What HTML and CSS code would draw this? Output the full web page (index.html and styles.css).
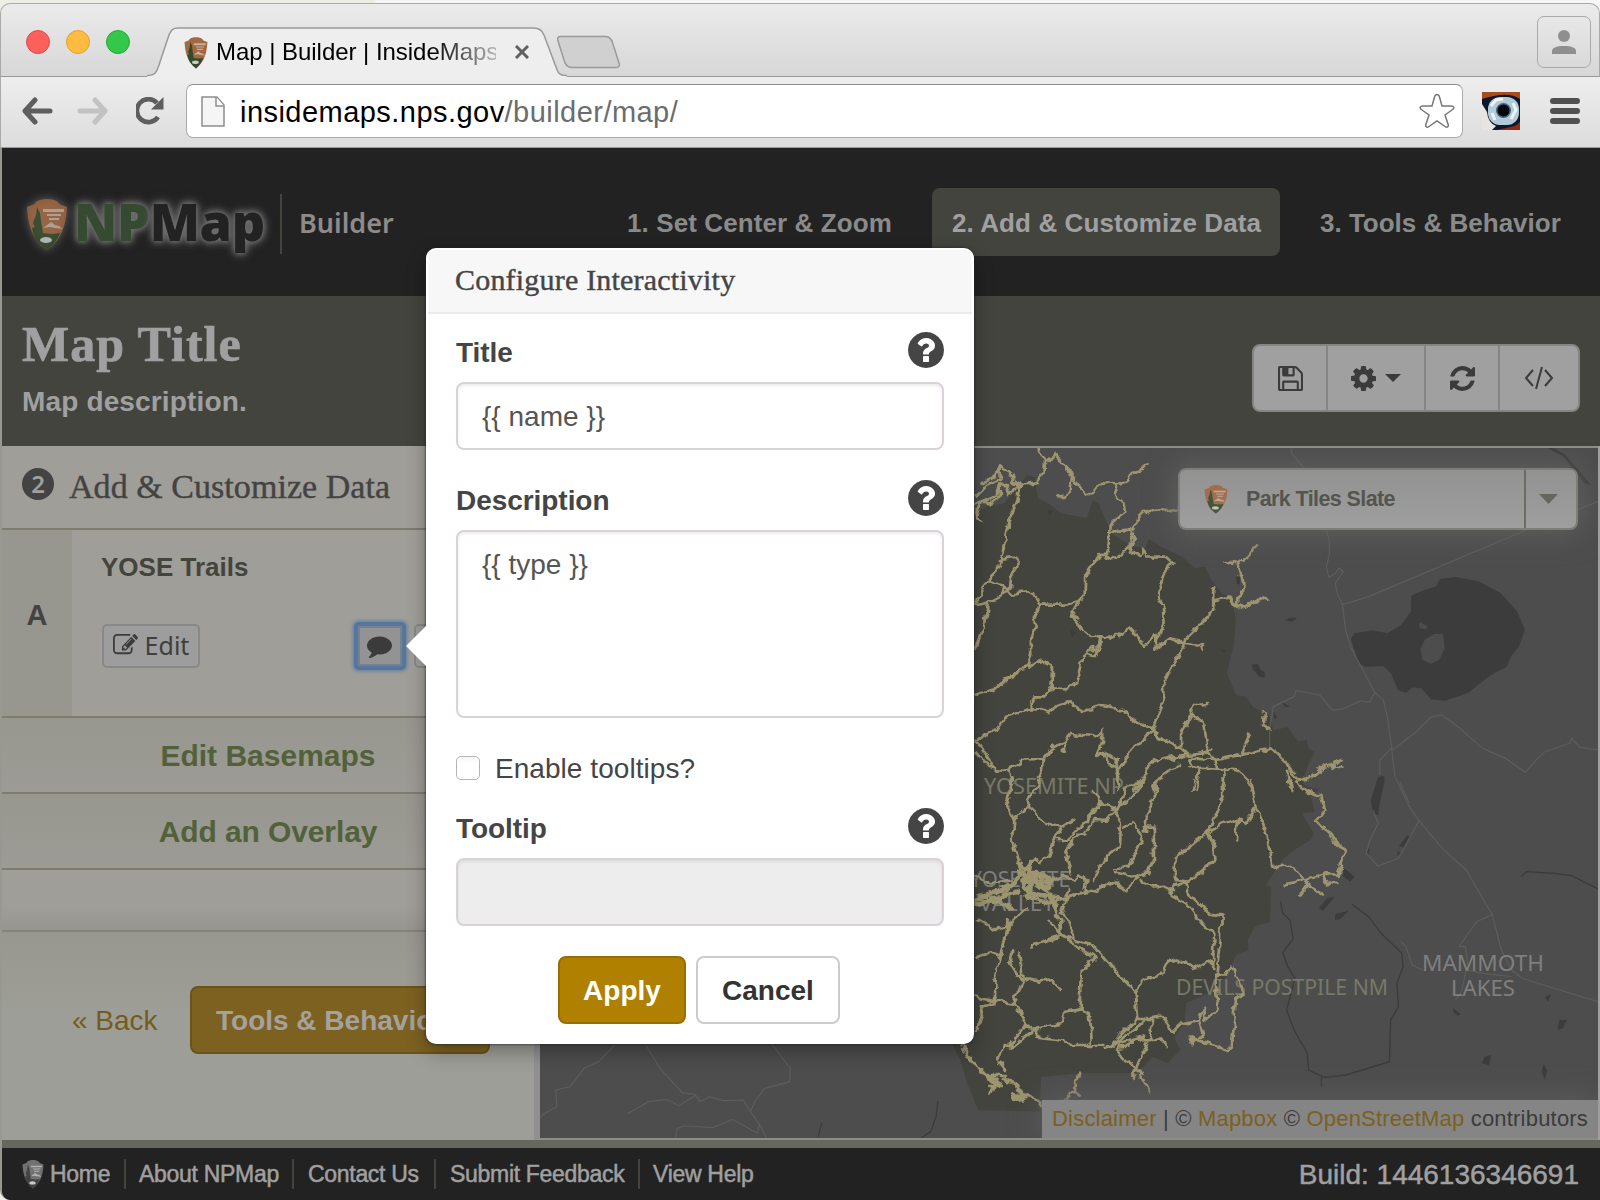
FILE: index.html
```html
<!DOCTYPE html>
<html lang="en">
<head>
<meta charset="utf-8">
<title>Map | Builder | InsideMaps</title>
<link rel="stylesheet" href="styles.css">
</head>
<body>
<svg class="defs" width="0" height="0">
  <defs>
    <symbol id="shield" viewBox="0 0 42 54" preserveAspectRatio="none">
      <path fill="#a5673f" d="M10 5C14 1 28 1 32 5C34 9 38 8 41 10C40 28 36 42 21 53C6 42 2 28 1 10C4 8 8 9 10 5Z"/>
      <path fill="#324b2a" d="M11 10l3 6 1 8 2 12 9 1 8-1c-3 8-8 13-13 17C13 47 8 42 6 31l3-1-2-4 3-8z"/>
      <path fill="#c4b0a4" d="M17 12h21v3H17zM21 17h14v2H21zM23 21h10v2H23zM17 31l8-6 4 3 4 1 4 3-8-1-5-1z"/>
      <ellipse cx="20" cy="43" rx="6" ry="3" fill="#c9ccc6"/>
    </symbol>
    <symbol id="help" viewBox="128 128 1536 1536"><path d="M1024 1376v-192q0-14-9-23t-23-9h-192q-14 0-23 9t-9 23v192q0 14 9 23t23 9h192q14 0 23-9t9-23zm256-672q0-88-55.500-163t-138.500-116-170-41q-243 0-371 213-15 24 8 42l132 100q7 6 19 6 16 0 25-12 53-68 86-92 34-24 86-24 48 0 85.500 26t37.500 59q0 38-20 61t-68 45q-63 28-115.500 86.500t-52.500 125.500v36q0 14 9 23t23 9h192q14 0 23-9t9-23q0-19 21.500-49.500t54.500-49.500q32-18 49-28.500t46-35 44.500-48 28-60.500 12.500-81zm384 192q0 209-103 385.500t-279.500 279.500-385.500 103-385.500-103-279.500-279.500-103-385.500 103-385.500 279.500-279.500 385.500-103 385.500 103 279.500 279.500 103 385.500z"/></symbol>
    <filter id="wander" filterUnits="userSpaceOnUse" x="-10" y="-1400" width="2600" height="4600"><feTurbulence type="fractalNoise" baseFrequency=".09" numOctaves="3" seed="7"/><feDisplacementMap in="SourceGraphic" scale="9" xChannelSelector="R" yChannelSelector="G"/></filter>
  </defs>
</svg>

<div class="window">
  <div class="titlebar">
    <div class="lights"><i class="red"></i><i class="yellow"></i><i class="green"></i></div>
    <div class="tab">
      <svg class="tab-shape" width="420" height="50" viewBox="0 0 420 50">
        <path d="M0 49C10 49 10 43 12 38L22 8C24 3 26 1.500 31 1.500H387C392 1.500 395 3 397 8L409 40C411 46 412 49 420 49V50H0Z" fill="#eee"/>
        <path d="M0 48.500C10 48.500 10 43 12 38L22 8C24 3 26 1 31 1H387C392 1 395 3 397 8L409 40C411 46 412 48.500 420 48.500" fill="none" stroke="#999" stroke-width="1.500"/>
      </svg>
      <svg class="favicon" width="24" height="33"><use href="#shield" width="24" height="33"/></svg>
      <span class="tab-title">Map | Builder | InsideMaps</span>
      <svg class="tab-close" width="14" height="14" viewBox="0 0 14 14"><path d="M1 1l12 12M13 1L1 13" stroke="#606060" stroke-width="3"/></svg>
    </div>
    <svg class="new-tab" width="66" height="34" viewBox="0 0 66 34"><path d="M5 1.500H49C53 1.500 54 3 56 6L63 28C64 31 63 32.500 60 32.500H17C12 32.500 11 31 9 28L2 6C1 3 2 1.500 5 1.500Z" fill="#d0d0d0" stroke="#999" stroke-width="1.500"/></svg>
    <div class="profile"><svg width="24" height="24" viewBox="0 0 24 24" fill="#8f8f8f"><circle cx="12" cy="6" r="6"/><path d="M0 24v-3c0-3 4-5 12-5s12 2 12 5v3z"/></svg></div>
  </div>
  <div class="toolbar">
    <svg class="nav-icon" width="32" height="28" viewBox="0 0 32 28" fill="none" stroke="#5e5e5e" stroke-width="5" stroke-linecap="round" stroke-linejoin="round"><path d="M14 3L4 14l10 11M5 14h24"/></svg>
    <svg class="nav-icon" width="32" height="28" viewBox="0 0 32 28" fill="none" stroke="#c2c2c2" stroke-width="5" stroke-linecap="round" stroke-linejoin="round"><path d="M18 3l10 11-10 11M27 14H3"/></svg>
    <svg class="reload" width="28" height="28" viewBox="0 0 28 28"><path d="M22 20A11.500 11.500 0 1 1 21 6" fill="none" stroke="#5e5e5e" stroke-width="4.600"/><path d="M27.500 0v12.500H15z" fill="#5e5e5e"/></svg>
    <div class="omnibox">
      <svg width="24" height="31" viewBox="0 0 24 31"><path d="M1 1h15l7 8v21H1z" fill="#f5f5f5" stroke="#8d8d8d" stroke-width="1.500"/><path d="M15 1v9h8" fill="#fff" stroke="#8d8d8d" stroke-width="1.500"/></svg>
      <span class="url"><b>insidemaps.nps.gov</b>/builder/map/</span>
      <svg width="36" height="36" viewBox="0 0 36 36"><path d="M18 1.500C19 1.500 20 2 20.500 4L23 13H32C35 13 36 15 33 17L26 22L29 31C30 34 28 35 26 33.500L18 28L10 33.500C8 35 6 34 7 31L10 22L3 17C0 15 1 13 4 13H13L15.500 4C16 2 17 1.500 18 1.500Z" fill="none" stroke="#777" stroke-width="1.500"/></svg>
    </div>
    <svg class="extension" width="38" height="38" viewBox="0 0 38 38"><rect width="38" height="38" fill="#0e1729"/><path d="M0 0H38V7C28 0 14 3 0 7z" fill="#a54d21"/><path d="M0 12L5 20Q6 31 14 34L10 38H0z" fill="#e6e5e3"/><path d="M38 30V38H15L33 34z" fill="#8c2c16"/><rect x="6" y="5" width="31" height="28" rx="12" fill="#b1cad9"/><path d="M9 14l5-6 7-1M31 11l3 7-5 9M13 28l-3-7" stroke="#edf4f6" stroke-width="3" fill="none"/><circle cx="21.500" cy="18.500" r="7.500" fill="#47637a"/><circle cx="21.500" cy="18.500" r="6" fill="#02050a"/></svg>
    <div class="menu-icon"><i></i><i></i><i></i></div>
  </div>

  <div class="app">
    <header class="site-header">
      <div class="brand">
        <svg class="brand-shield" width="42" height="54"><use href="#shield" width="42" height="54" opacity=".78"/></svg>
        <span class="brand-name"><em>NP</em>Map</span>
        <span class="brand-sub">Builder</span>
      </div>
      <nav class="steps">
        <a class="step s1">1. Set Center &amp; Zoom</a>
        <a class="step s2 active">2. Add &amp; Customize Data</a>
        <a class="step s3">3. Tools &amp; Behavior</a>
      </nav>
    </header>

    <section class="title-band">
      <div>
        <h1>Map Title</h1>
        <p>Map description.</p>
      </div>
      <div class="btn-group">
        <span class="save"><svg width="25" height="25" viewBox="128 128 1536 1536"><path d="M512 1536h768v-384h-768v384zm896 0h128v-896q0-14-10-38.500t-20-34.500l-281-281q-10-10-34-20t-39-10v416q0 40-28 68t-68 28h-576q-40 0-68-28t-28-68v-416h-128v1280h128v-416q0-40 28-68t68-28h832q40 0 68 28t28 68v416zm-384-928v-320q0-13-9.500-22.500t-22.500-9.500h-192q-13 0-22.500 9.500t-9.500 22.500v320q0 13 9.500 22.500t22.500 9.500h192q13 0 22.500-9.500t9.500-22.500zm640 32v928q0 40-28 68t-68 28h-1344q-40 0-68-28t-28-68v-1344q0-40 28-68t68-28h928q40 0 88 20t76 48l280 280q28 28 48 76t20 88z"/></svg></span>
        <span class="gear"><svg width="25" height="25" viewBox="128 128 1536 1536"><path d="M1152 896q0-106-75-181t-181-75-181 75-75 181 75 181 181 75 181-75 75-181zm512-109v222q0 12-8 23t-20 13l-185 28q-19 54-39 91 35 50 107 138 10 12 10 25t-9 23q-27 37-99 108t-94 71q-12 0-26-9l-138-108q-44 23-91 38-16 136-29 186-7 28-36 28h-222q-14 0-24.500-8.500t-11.500-21.500l-28-184q-49-16-90-37l-141 107q-10 9-25 9-14 0-25-11-126-114-165-168-7-10-7-23 0-12 8-23 15-21 51-66.500t54-70.500q-27-50-41-99l-183-27q-13-2-21-12.500t-8-23.500v-222q0-12 8-23t19-13l186-28q14-46 39-92-40-57-107-138-10-12-10-24 0-10 9-23 26-36 98.500-107.500t94.500-71.500q13 0 26 10l138 107q44-23 91-38 16-136 29-186 7-28 36-28h222q14 0 24.500 8.500t11.500 21.500l28 184q49 16 90 37l142-107q9-9 24-9 13 0 25 10 129 119 165 170 7 8 7 22 0 12-8 23-15 21-51 66.500t-54 70.500q26 50 41 98l183 28q13 2 21 12.500t8 23.500z"/></svg><svg width="16" height="8" viewBox="0 0 16 8"><path d="M0 0h16L8 8z"/></svg></span>
        <span class="sync"><svg width="25" height="25" viewBox="128 128 1536 1536"><path d="M1639 1056q0 5-1 7-64 268-268 434.500t-478 166.500q-146 0-282.500-55t-243.500-157l-129 129q-19 19-45 19t-45-19-19-45v-448q0-26 19-45t45-19h448q26 0 45 19t19 45-19 45l-137 137q71 66 161 102t187 36q134 0 250-65t186-179q11-17 53-117 8-23 30-23h192q13 0 22.500 9.500t9.500 22.500zm25-800v448q0 26-19 45t-45 19h-448q-26 0-45-19t-19-45 19-45l138-138q-148-137-349-137-134 0-250 65t-186 179q-11 17-53 117-8 23-30 23h-199q-13 0-22.500-9.500t-9.500-22.500v-7q65-268 270-434.500t480-166.500q146 0 284 55.500t245 156.500l130-129q19-19 45-19t45 19 19 45z"/></svg></span>
        <span class="code"><svg width="30" height="24" viewBox="0 0 30 24" fill="none" stroke="#3b3b3b" stroke-width="2"><path d="M9 4L2 12l7 8M21 4l7 8-7 8M18 1l-6 22"/></svg></span>
      </div>
    </section>

    <main class="content">
      <aside class="sidebar">
        <div class="side-head"><span class="num">2</span><h2>Add &amp; Customize Data</h2></div>
        <div class="layer">
          <div class="letter">A</div>
          <div class="layer-body">
            <h3>YOSE Trails</h3>
            <div class="layer-actions">
              <span class="mini edit"><svg width="25" height="22" viewBox="0 128 1792 1536" preserveAspectRatio="none"><path d="M888 1184l116-116-152-152-116 116v56h96v96h56zm440-720q-16-16-33 1l-350 350q-17 17-1 33t33-1l350-350q17-17 1-33zm80 594v190q0 119-84.500 203.500t-203.500 84.500h-832q-119 0-203.500-84.500t-84.500-203.500v-832q0-119 84.500-203.500t203.500-84.500h832q63 0 117 25 15 7 18 23 3 17-9 29l-49 49q-14 14-32 8-23-6-45-6h-832q-66 0-113 47t-47 113v832q0 66 47 113t113 47h832q66 0 113-47t47-113v-126q0-13 9-22l64-64q15-15 35-7t20 29zm-96-738l288 288-672 672h-288v-288zm444 132l-92 92-288-288 92-92q28-28 68-28t68 28l152 152q28 28 28 68t-28 68z"/></svg><b>Edit</b></span>
              <span class="mini focus"><svg width="25" height="25" viewBox="0 0 1792 1792"><path d="M1792 896q0 174-120 321.500t-326 233-450 85.500q-70 0-145-8-198 175-460 242-49 14-114 22-17 2-30.500-9t-17.500-29v-1q-3-4-.5-12t2-10 4.500-9.500l6-9 7-8.500 8-9q7-8 31-34.500t34.500-38 31-39.500 32.500-51 27-59 26-76q-157-89-247.500-220t-90.500-281q0-130 71-248.500t191-204.500 286-136.500 348-50.500q244 0 450 85.500t326 233 120 321.500z"/></svg></span>
              <span class="mini"></span>
            </div>
          </div>
        </div>
        <a class="side-link">Edit Basemaps</a>
        <a class="side-link second">Add an Overlay</a>
        <div class="side-space"></div>
        <div class="side-nav"><a class="back">« Back</a><a class="next">Tools &amp; Behavior »</a></div>
      </aside>

      <div class="map">
        <svg class="map-art" width="1058" height="690" viewBox="0 0 1058 690">
          <!-- park area, lake, and small water bodies -->
          <g transform="translate(410 -8) scale(.41454 .33333)">
            <path fill="#43443e" d="M0 230L60 218L90 200L130 190L165 140L185 105L205 112L212 175L235 188L268 220L330 235L345 180L358 190L375 240L390 280L420 305L440 318L470 325L480 297L510 320L560 350L590 385L615 380L630 420L655 460L680 480L690 540L685 610L668 700L690 765L715 770L730 800L770 825L780 870L815 862L840 905L860 900L865 925L880 935L862 980L850 1030L862 1040L890 1048L870 1070L880 1115L850 1120L858 1140L878 1180L870 1200L830 1230L805 1255L790 1280L762 1335L775 1340L772 1445L735 1460L718 1500L720 1530L690 1545L675 1590L660 1620L640 1650L570 1690L565 1750L540 1790L555 1830L525 1870L490 1850L450 1900L310 1900L220 1910L215 2015L68 2010L40 1925L25 1860L0 1800Z"/>
            <g fill="#3c3c3c">
              <path fill-rule="evenodd" d="M967 597L975 580L1020 571L1055 580L1088 555L1112 515V468L1130 457L1173 438L1182 417L1220 411L1275 424L1328 459L1368 514L1387 570L1372 620L1353 650L1343 680L1305 705L1250 758L1195 782L1160 778L1137 745L1115 742L1100 759L1080 750L1065 702L1045 678L1003 681L986 670ZM1168 581L1190 583L1193 626L1180 660L1160 671L1140 660L1135 628L1145 600ZM1132 546L1152 559L1148 568L1132 564Z"/>
              <path d="M807 541L820 533L838 534L825 545ZM728 674L742 672L750 690L759 697V713L746 710L730 686ZM690 410L700 412L698 435L692 430ZM800 787L820 799L810 802ZM780 815L789 830L783 840ZM1035 1003L1048 1010V1025L1035 1100L1033 1125L1020 1120L1015 1080L1028 1030ZM1104 1185L1111 1192L1095 1223L1083 1218ZM1080 1232L1087 1240L1078 1248ZM1005 1220L1013 1230L1008 1248ZM950 1283L976 1310L965 1325L948 1308ZM910 1375L928 1370L900 1412L890 1405ZM930 1422L962 1412L940 1438L928 1440ZM1213 1704L1232 1722L1225 1727L1215 1717ZM1435 1670L1450 1663L1442 1685ZM1470 1740L1488 1740L1478 1765L1465 1770ZM1290 1850L1306 1845L1300 1875L1283 1870ZM1432 1873L1440 1890L1435 1920L1427 1895ZM235 210L247 212L240 228ZM290 570L305 575L295 592ZM653 627L667 632L660 637ZM1440 23L1480 50L1530 130L1545 135L1540 125L1485 45L1455 23Z"/>
            </g>
            <!-- roads -->
            <g class="roads">
              <path d="M822 23L825 42L855 85M908 270L915 300V345L908 380L914 412L930 400L938 384L949 395L940 410L929 430L935 463L947 494L954 570L968 625L1000 700L1025 757L1045 780L1055 830L1065 920L1073 1010L1083 1035L1108 1100L1130 1140L1157 1180L1190 1228L1245 1290L1308 1424L1330 1530L1355 1590L1380 1615L1470 1650L1563 1685"/>
              <path d="M947 494L1010 470L1390 270L1563 185M771 920V870L780 800L800 788L830 770L835 752L892 765L922 810L950 806L990 783L1012 787L1025 757M1068 930L1120 880L1160 832L1186 824L1225 860L1285 925L1340 955L1388 997L1415 958L1435 935L1495 910L1499 895L1520 922L1563 930M1068 920L1037 960V1010M1085 1025L1108 1090M1020 1110L1033 1150L1013 1200L1004 1240L1032 1278L1082 1255L1132 1140M1308 1424L1270 1445L1228 1520L1243 1520L1250 1580M1355 1610L1287 1600L1245 1590L1235 1650L1220 1680M1087 1505L1100 1520L1115 1575L1140 1590"/>
            </g>
            <g class="boundary"><path d="M797 1385L803 1420L820 1440L828 1495L803 1538L815 1580L832 1615L812 1710L830 1770L862 1840L865 1890L903 1912L955 1905L1060 1865L1063 1740L1082 1700L1078 1630L1093 1580L1090 1540L1040 1480L1010 1430L970 1393M896 1910V1940M1378 1310L1390 1295L1460 1300L1500 1307L1563 1347"/></g>
          </g>
          <g class="places">
            <text class="park" x="444" y="346" textLength="140" lengthAdjust="spacingAndGlyphs">YOSEMITE NP</text>
            <text x="430" y="439" textLength="100" lengthAdjust="spacingAndGlyphs">YOSEMITE</text>
            <text x="439" y="463" textLength="76" lengthAdjust="spacingAndGlyphs">VALLEY</text>
            <text class="park" x="636" y="547" textLength="212" lengthAdjust="spacingAndGlyphs">DEVILS POSTPILE NM</text>
            <text x="882" y="523" textLength="122" lengthAdjust="spacingAndGlyphs">MAMMOTH</text>
            <text x="911" y="548" textLength="64" lengthAdjust="spacingAndGlyphs">LAKES</text>
          </g>
          <!-- trail network -->
          <g filter="url(#wander)">
            <g class="trails" transform="translate(410 -8) scale(.41454 .33333)">
              <path d="M214 24L219 42L229 54L228 96L210 123L188 128L165 148L163 180L137 265L130 320L118 380L110 395L95 410L90 430L60 487M229 57L243 60L254 40L262 61L282 81L293 98L289 145L278 170L263 172M282 81L293 112L323 158L343 160L360 133L376 129L397 137L427 127L440 97L463 90L477 73M397 140L400 165L418 185L423 215L408 235L385 260L382 330L375 352L392 361L430 323L438 295L445 280L440 265M385 282L400 272L447 268L453 230L470 209L487 214L520 206L550 210M440 283L448 300L434 320L440 333L457 348L463 328L476 349L520 350L537 369L517 400L500 460L514 500L515 550L493 632L498 585L470 615L435 566L417 587L398 582L372 597L355 592L315 564L294 525L315 480L325 465L326 410L348 368L362 345L379 344M315 483L275 494L215 493L212 512L197 540L208 565L195 600L196 640L187 680L169 687L155 710L130 722L105 752L60 765M215 493L200 456L145 461L130 440L95 427M130 440L122 470L95 487L60 495M118 357L162 350L160 380L147 410L145 440L130 460M92 490L82 555L70 600L60 625M60 170L85 140L122 120L122 80L150 108L165 140L138 165L145 130L120 135L112 165L60 193M122 80L110 108L75 135M120 145V170L98 187L75 185L65 235L80 242"/>
              <path d="M360 597L355 625L330 632L312 690L305 725L290 745L245 742L246 680L215 661L187 682M245 742L230 772L205 772L190 805L130 835L112 870L85 885L60 902M363 600V625L347 648L330 642M190 805L215 805L237 819L252 800L290 787L320 810L363 798L412 808L450 845L490 870L498 848L515 780L514 735L537 672L565 615L570 595L605 553L635 510L635 440M565 608L605 615L610 632M565 607L533 595L500 627M638 485L670 472L705 504L740 480L750 473L768 482M693 493V470L710 452V430L692 373L665 366M692 373L720 345L737 318M490 872L440 925L410 987L405 1040M490 872L500 890L555 922L575 945L610 940L630 925M555 922V880L583 822L613 850L620 920L640 960L718 940L770 922L805 962L830 1000L845 1023L862 1018L900 983L925 975L952 980M583 822L593 795L620 792M757 820L755 855L765 870L773 867M725 876L705 940M925 980L945 957M575 945L545 960L526 950L480 970L465 1010L445 1050M575 975L605 983L690 990L715 1020L725 1050M585 980L580 955L640 960L645 985M550 975L510 1010L490 1050M603 983L595 1050M661 990L665 1050M60 902L75 920L110 988L92 982L60 930M110 988L140 990L180 958L225 957L245 925L275 905L290 882L350 888L367 873V905L357 945L375 935L402 955L405 1050M275 905V935M225 957L222 990L215 1010M815 990L825 1050M140 990L150 1030M375 940L380 960L405 985"/>
              <path transform="translate(0 1020)" d="M150 0L135 65L155 120L152 180L170 260L180 290L230 320L250 360L265 420L270 465L340 490L385 555L430 610L445 635L452 715L392 790M215 0L185 80L215 115L250 137L270 140L298 120M155 120L180 82M340 30L365 70L330 120L298 160L280 180L250 180L240 225L215 255L208 235L170 280M345 40L375 75L405 90L420 30L465 0M398 90L380 123L345 120L325 160L298 175L290 200L280 240L290 280M268 145L240 205M465 0L450 40L398 90L412 130L410 200L385 225L360 260L345 300M420 140L440 130L465 170L440 230L430 260L395 270M470 140H492V240L475 280L435 290L395 280M505 0L495 40L475 100L470 160M725 0L740 85L765 160L775 260L805 250L835 270L860 310L895 343M660 0L662 50L625 150L545 232L540 290L545 300L575 305L640 240L638 200L620 160L660 130L695 115L710 135L735 90M590 180L630 150M695 115L690 175M815 0L825 30M835 5L845 25L893 50L903 90L885 120L925 175L950 215L945 255L935 285L905 280L850 300L810 315M850 295L870 310L850 340M905 280L910 308L930 313M590 0L585 28M180 290L215 320L270 290L300 300L310 285L330 305L325 340L240 370L180 350M325 330L355 335L395 300L425 330L450 300L455 280M180 350L210 350L270 355L325 340M460 300L488 322L535 320L570 305L575 340L625 400L655 407V450L645 590M535 320V345L570 370L620 450L635 460V570M270 465L200 492L202 508M270 465L350 535L318 575L315 690L275 700L270 728L205 750L185 735L155 670L110 665L60 650M140 420L132 470L120 530L110 600L108 670L80 680L65 750M65 420L85 430L110 450L140 440L180 390M60 380L120 360L155 300L95 310L60 290M65 530L95 512L125 525M150 520L145 550L165 590L215 605L250 600L265 630M167 520L175 590L155 670L185 735L145 795M205 750L210 770L275 780L290 795L370 795M205 750L150 800L130 795L115 842M370 805L392 800L445 745L480 715L510 710L540 755L560 730L600 720L610 685L615 720L645 685L640 590L655 590L680 563L690 590L700 610L710 640L690 655L680 800L665 813L640 795L610 785L580 770M600 720L610 760L590 790L582 770M445 635L470 600L515 575L530 537L550 550L570 545L590 565L620 545L635 560M645 585L640 600M405 800L420 840L455 870L480 935M390 795L465 770L475 790L450 870L445 895M405 800L430 797L445 780L510 775L525 795M445 635L452 720L490 720L485 770M310 690L335 700L340 795M30 795L45 835L75 865L85 885L130 885L125 900L155 905L160 930L210 960L222 975M75 880L110 895L100 940M80 885L125 915L95 915M310 880L300 935L315 950M300 930L275 960M120 850L133 870M270 465L240 420M285 330L270 400L300 470"/>
              <path class="knot" d="M165 1295L200 1320L230 1345L245 1325L218 1300L175 1330L185 1355L235 1370L260 1400M170 1270L235 1335M195 1270L190 1370M60 1375L145 1340L175 1300M60 1390L165 1355M90 1380L145 1400M150 1965L185 1970L155 1980Z"/>
            </g>
          </g>
          <g class="roads" transform="translate(-120 292) scale(.35714 .33333)"><path d="M336 1132L350 1120L383 1100L380 1050L420 1040L460 985L500 965L545 915M630 912L675 990L735 1058L770 1063L785 1085L810 1070L850 1082L905 1080L925 1115L955 1160L970 1193M580 1122L615 1100L640 1085L690 1078L725 1097L770 1067M985 912L1037 985L1035 1025L965 1045L940 1080L925 1115M715 1193L720 1165L740 1158L820 1163L875 1138L945 1180L950 1155"/></g>
          <g class="boundary" transform="translate(-120 292) scale(.35714 .33333)"><path d="M1125 1150L1115 1190M1450 1083L1445 1130L1430 1175L1405 1193"/></g>
        </svg>
        <div class="basemap">
          <svg width="24" height="30"><use href="#shield" width="24" height="30" opacity=".85"/></svg>
          <span>Park Tiles Slate</span>
          <i><svg width="19" height="10" viewBox="0 0 19 10"><path d="M0 0h19L9.500 10z" fill="#66665d"/></svg></i>
        </div>
        <div class="credits"><a>Disclaimer</a> | © <a>Mapbox</a> © <a>OpenStreetMap</a> contributors</div>
      </div>
    </main>

    <footer class="footer">
      <svg width="22" height="30" class="foot-shield"><use href="#shield" width="22" height="30"/></svg>
      <a class="f1">Home</a><a class="f2">About NPMap</a><a class="f3">Contact Us</a><a class="f4">Submit Feedback</a><a class="f5">View Help</a>
      <span class="build">Build: 1446136346691</span>
    </footer>
  </div>

  <div class="popover">
    <svg class="arrow" width="21" height="42" viewBox="0 0 21 42"><path d="M21 0L0 21l21 21z" fill="#fff"/></svg>
    <h4>Configure Interactivity</h4>
    <div class="form">
      <div class="label-row"><label class="l1">Title</label><svg width="36" height="36"><use href="#help" width="36" height="36"/></svg></div>
      <div class="field">{{ name }}</div>
      <div class="label-row gap"><label class="l2">Description</label><svg width="36" height="36"><use href="#help" width="36" height="36"/></svg></div>
      <div class="field area">{{ type }}</div>
      <div class="check-row"><i></i><span>Enable tooltips?</span></div>
      <div class="label-row"><label class="l3">Tooltip</label><svg width="36" height="36"><use href="#help" width="36" height="36"/></svg></div>
      <div class="field disabled"></div>
      <div class="form-actions"><span class="apply">Apply</span><span class="cancel">Cancel</span></div>
    </div>
  </div>
</div>
</body>
</html>
```
FILE: styles.css
```css
* { box-sizing: border-box; }
body { margin: 0; width: 1600px; height: 1200px; overflow: hidden; background: linear-gradient(90deg, #eeede6 375px, #f6f6f6 376px); font-family: "Liberation Sans", Arial, sans-serif; }
svg { display: block; flex: none; }
.defs { position: absolute; }
h1, h2, h3, h4, p { margin: 0; }

.window { position: relative; height: 1200px; padding-top: 3px; }

/* browser chrome */
.titlebar { height: 74px; display: flex; align-items: flex-start; background: linear-gradient(#ebebeb, #d7d7d7); border: 1px solid #aaa; border-bottom-color: #999; border-radius: 10px 10px 0 0; }
.lights { display: flex; gap: 16px; padding: 26px 0 0 25px; width: 146px; }
.lights i { width: 24px; height: 24px; border-radius: 50%; border: 1px solid; }
.lights .red { background: #fc605c; border-color: #e14a46; }
.lights .yellow { background: #fdbc40; border-color: #e0a033; }
.lights .green { background: #34c84a; border-color: #28a935; }
.tab { position: relative; width: 409px; height: 50px; display: flex; align-items: center; margin-top: 23px; padding-left: 37px; }
.tab-shape { position: absolute; left: 0; top: 0; }
.favicon, .tab-title, .tab-close { position: relative; }
.tab-title { margin-left: 8px; width: 280px; white-space: nowrap; font-size: 24px; letter-spacing: -.04px; color: #000; background: linear-gradient(90deg, #000 215px, #bbb 282px); -webkit-background-clip: text; -webkit-text-fill-color: transparent; }
.tab-close { margin-left: 19px; }
.new-tab { margin-top: 31px; }
.profile { margin: 12px 8px 0 auto; width: 54px; height: 52px; border: 1.5px solid #aaa; border-radius: 7px; display: flex; align-items: center; justify-content: center; }
.toolbar { height: 71px; display: flex; align-items: center; padding: 0 20px 2px 20px; background: linear-gradient(#eee, #dcdcdc); border-left: 1px solid #aaa; border-bottom: 1px solid #999; }
.nav-icon { margin-right: 24px; }
.reload { margin-right: 23px; margin-left: 3px; }
.omnibox { width: 1278px; height: 54px; display: flex; align-items: center; padding: 0 7px 0 14px; background: #fff; border: 1.5px solid #aaa; border-top-color: #8d8d8d; border-radius: 7px; margin-left: -1px; }
.url { flex: 1; padding: 2px 0 0 15px; font-size: 29px; letter-spacing: .46px; color: #6c6c6c; }
.url b { font-weight: 400; color: #000; }
.extension { margin-left: 19px; }
.menu-icon { margin-left: 30px; width: 30px; display: flex; flex-direction: column; gap: 4px; }
.menu-icon i { height: 6px; border-radius: 3px; background: #505050; }

/* application */
.app { height: 1052px; border-left: 2px solid #989892; background: #222; border-bottom-left-radius: 10px; overflow: hidden; }
.site-header { height: 148px; display: flex; align-items: center; justify-content: space-between; padding: 0 20px 0 24px; background: #222; }
.brand { display: flex; align-items: center; height: 60px; margin-top: 4px; font-family: "Open Sans", "Noto Sans", sans-serif; }
.brand-shield { filter: drop-shadow(0 0 5px #777); }
.brand-name { margin-left: 6px; width: 206px; height: 60px; line-height: 54px; font-size: 52px; font-weight: 800; letter-spacing: -.3px; color: #222; text-shadow: 0 0 5px #707070, 0 0 8px #707070, 0 0 12px #666; }
.brand-name em { font-style: normal; color: #364a31; }
.brand-sub { height: 60px; line-height: 58px; padding-left: 17px; border-left: 2px solid #44443f; font-size: 27px; font-weight: 600; color: #8f8b8a; font-family: "Noto Sans", sans-serif; }
.steps { display: flex; gap: 20px; }
.step { height: 68px; line-height: 70px; padding: 0 20px; border-radius: 8px; font-size: 26px; font-weight: 700; letter-spacing: .1px; color: #8a8a8a; white-space: nowrap; }
.step.active { background: #44443f; color: #a0a0a0; }
.s1 { width: 305px; } .s2 { width: 348px; } .s3 { width: 280px; letter-spacing: 0; }
.title-band { height: 150px; display: flex; align-items: flex-start; justify-content: space-between; padding: 0 20px; background: #44443f; color: #a0a0a0; }
.title-band h1 { margin-top: 20px; font: 700 50px/56px "Liberation Serif", serif; letter-spacing: 1px; -webkit-text-stroke: .7px #a0a0a0; }
.title-band p { margin-top: 13px; font-size: 28px; line-height: 34px; font-weight: 700; letter-spacing: .15px; }
.btn-group { display: flex; width: 328px; height: 68px; margin-top: 48px; background: #a0a0a0; border: 2px solid #848484; border-radius: 8px; }
.btn-group span { display: flex; align-items: center; justify-content: center; gap: 9px; border-right: 2px solid #848484; fill: #3b3b3b; }
.save { width: 74px; } .gear { width: 98px; } .sync { width: 74px; }
.btn-group .code { flex: 1; border: 0; fill: none; }

.content { height: 694px; display: flex; border-right: 2px solid #a09fa0; background: #9b9b97; }
.sidebar { width: 538px; border-right: 6px solid #918f92; background: #9f9e98; color: #434343; }
.side-head { height: 84px; display: flex; align-items: center; padding: 0 0 7px 20px; border-bottom: 2px solid #7d7c6f; }
.num { width: 32px; height: 32px; border-radius: 50%; background: #434343; color: #a09f9a; font: 600 24px/31px "Noto Sans", sans-serif; text-align: center; }
.side-head h2 { margin: 6px 0 0 15px; font: 400 34px/40px "Liberation Serif", serif; letter-spacing: .05px; -webkit-text-stroke: .4px #434343; white-space: nowrap; }
.layer { height: 188px; display: flex; border-bottom: 2px solid #7d7c6f; }
.letter { width: 70px; padding-top: 69px; background: #97968f; text-align: center; font-size: 29px; line-height: 32px; font-weight: 700; }
.layer-body { flex: 1; padding: 22px 12px 0 30px; }
.layer-body h3 { margin-left: -1px; font-size: 26px; line-height: 30px; color: #43443e; letter-spacing: 0; }
.layer-actions { display: flex; margin-top: 42px; }
.mini { width: 48px; height: 44px; display: flex; align-items: center; justify-content: center; gap: 7px; border: 2px solid #88878a; border-radius: 5px; background: #9d9d9d; fill: #3b3b3b; }
.mini.edit { width: 98px; font: 25px/34px "Noto Sans", sans-serif; color: #3f3f3f; }
.mini.edit svg { margin-bottom: 2px; }
.mini b { font-weight: 400; margin-top: -3px; }
.mini.focus { margin: 0 10px 0 156px; background: #939393; border-color: #5a7699; box-shadow: 0 0 0 2px #54769d, inset 0 0 0 2px #738196, 0 0 3px 4px #7288a3; border-radius: 3px; }
.mini.focus svg { margin: -1px 2px 0 0; }
.side-link { display: block; height: 76px; padding-top: 1px; background: linear-gradient(#97968f, #9c9b95); border-bottom: 2px solid #7d7c6f; font-size: 30px; line-height: 74px; font-weight: 700; text-align: center; color: #53613b; }
.side-link.second { letter-spacing: -.1px; }
.side-space { height: 62px; background: linear-gradient(#9f9e98 60%, #96958f); border-bottom: 2px solid #84847b; }
.side-nav { height: 208px; display: flex; align-items: flex-start; padding: 54px 0 0 70px; background: linear-gradient(#98978f, #9d9e97 40%); }
.back { width: 118px; font-size: 28px; line-height: 70px; color: #765b20; }
.next { width: 300px; height: 68px; padding-left: 24px; border: 2px solid #6b531c; border-radius: 8px; background: #7c6121; color: #a4a29e; font-size: 28px; line-height: 66px; font-weight: 700; }

/* map */
.map { position: relative; flex: 1; overflow: hidden; border: solid #8c8c88; border-width: 2px 0; background: #4d4d4d; }
.roads path { fill: none; stroke: #5d5d5d; stroke-width: 1.2; vector-effect: non-scaling-stroke; }
.boundary path { fill: none; stroke: #3b3b3b; stroke-width: 1.3; vector-effect: non-scaling-stroke; }
.trails path { fill: none; stroke: #9c956f; stroke-width: 2.7; stroke-linejoin: round; stroke-linecap: round; vector-effect: non-scaling-stroke; }
.trails .knot { stroke-width: 4.5; }
.places text { font: 21.5px "Noto Sans", sans-serif; fill: #7f7f7f; }
.places .park { fill: #777968; }
.basemap { position: absolute; left: 638px; top: 20px; width: 400px; height: 62px; display: flex; align-items: center; padding-left: 24px; background: linear-gradient(#929292, #9e9e9e); border: 2px solid #7e7e78; border-radius: 8px; box-shadow: 0 0 30px 2px #626262; }
.basemap span { margin-left: 18px; flex: 1; font-size: 21.5px; font-weight: 700; color: #555550; letter-spacing: -.6px; }
.basemap i { width: 52px; height: 58px; border-left: 2px solid #6c6c63; display: flex; align-items: center; padding-left: 13px; }
.credits { position: absolute; right: 0; bottom: 0; width: 556px; height: 38px; padding-left: 10px; background: #858585; box-shadow: 0 0 30px #5f5f5f; font-size: 22px; line-height: 37px; letter-spacing: .2px; color: #3b3b3b; white-space: nowrap; }
.credits a { color: #7b6020; }

.footer { height: 60px; display: flex; align-items: center; padding: 0 21px 0 20px; border-top: 8px solid #66675d; background: #222; color: #a0a0a0; font-size: 23px; letter-spacing: -.3px; -webkit-text-stroke: .5px #a0a0a0; white-space: nowrap; }
.foot-shield { filter: grayscale(1); }
.footer a { height: 30px; line-height: 30px; border-right: 2px solid #44443f; padding-left: 14px; }
.footer .f1 { width: 82px; padding-left: 6px; } .footer .f2 { width: 168px; padding-left: 13px; } .f3 { width: 142px; } .f4 { width: 204px; } .footer .f5 { border: 0; padding-left: 13px; }
.build { margin-left: auto; padding-top: 1px; font-size: 28px; letter-spacing: 0; }

/* interactivity popover */
.popover { position: absolute; left: 426px; top: 248px; width: 548px; height: 796px; padding: 2px; background: #fff; border-radius: 10px; box-shadow: 0 0 3px #222, 0 8px 20px rgba(0,0,0,.3); color: #454545; }
.arrow { position: absolute; left: -20px; top: 377px; }
.popover h4 { height: 64px; padding-left: 27px; background: #f7f7f7; border-bottom: 2px solid #ebebeb; border-radius: 8px 8px 0 0; font: 400 30px/60px "Liberation Serif", serif; letter-spacing: .2px; -webkit-text-stroke: .4px #454545; }
.form { padding: 18px 28px 0; }
.label-row { display: flex; justify-content: space-between; height: 36px; fill: #454545; }
.label-row.gap { margin-top: 30px; }
.label-row label { font-size: 28px; line-height: 42px; font-weight: 700; letter-spacing: -.05px; }
.field { height: 68px; margin-top: 14px; padding: 0 24px; border: 2px solid #d9d2d9; border-radius: 8px; background: #fff; box-shadow: inset 0 2px 3px rgba(0,0,0,.08); font-size: 28px; line-height: 66px; color: #555; }
.field.area { height: 188px; }
.field.disabled { background: #ededed; }
.check-row { display: flex; align-items: center; height: 24px; margin: 38px 0 28px; font-size: 28px; letter-spacing: .05px; }
.check-row i { width: 24px; height: 24px; margin-right: 15px; border: 1.5px solid #b4b4b4; border-radius: 5px; background: linear-gradient(#f6f6f6, #fff 30%); }
.check-row span { padding-top: 2px; }
.form-actions { display: flex; justify-content: center; gap: 10px; margin: 30px 2px 0 0; font-size: 28px; line-height: 66px; font-weight: 700; text-align: center; }
.form-actions span { height: 68px; border-radius: 8px; border: 2px solid #ccc; }
.form-actions .apply { width: 128px; background: #b08000; border-color: #976e00; color: #fff; }
.form-actions .cancel { width: 144px; color: #333; }
```
